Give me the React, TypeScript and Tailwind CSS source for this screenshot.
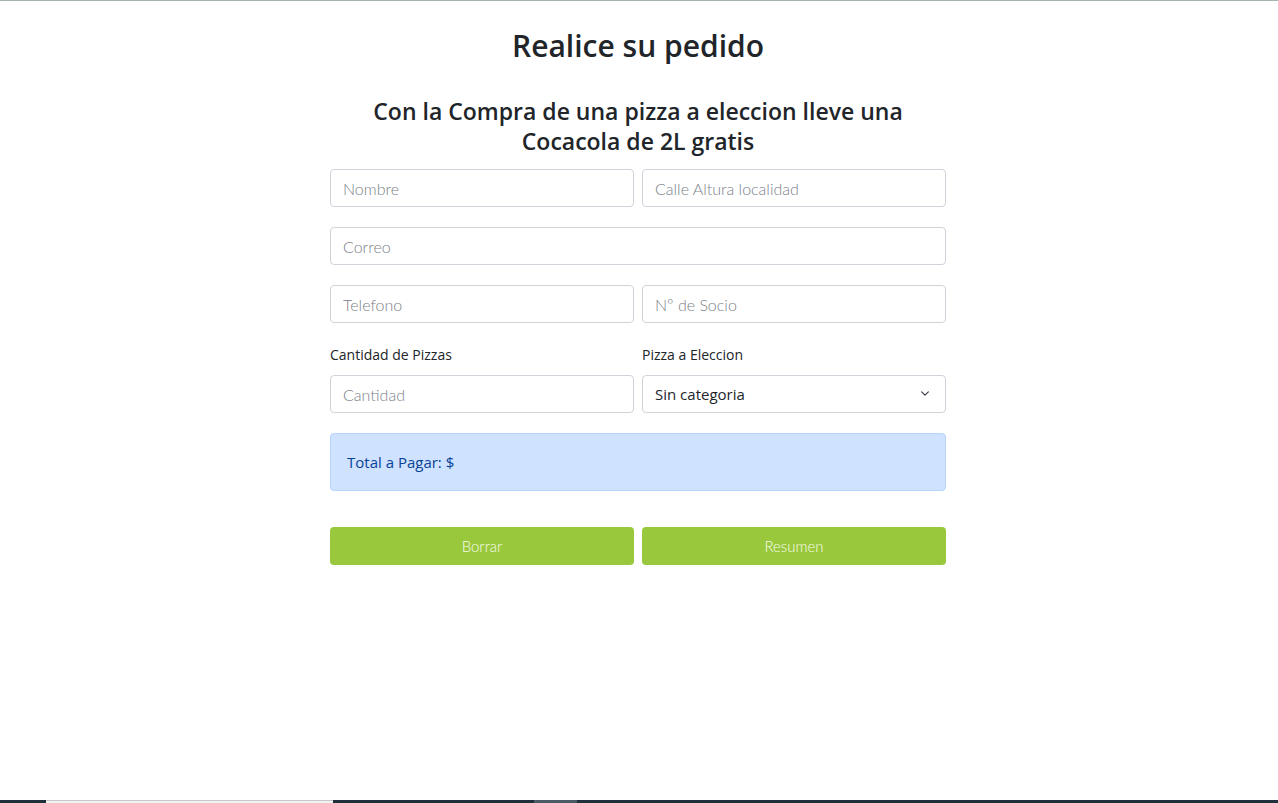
import React from "react";

const inputCls =
  "h-[38px] w-full rounded-[4px] border border-[#ced4da] bg-white px-3 text-[16px] text-[#212529] outline-none placeholder:text-[#7b8188] placeholder:font-light";

export default function App() {
  return (
    <div className="flex h-[803px] w-[1278px] flex-col overflow-hidden bg-white" style={{ fontFamily: '"Open Sans", "Noto Sans", sans-serif' }}>
      <div className="h-px w-full bg-[#a3b3aa]" />
      <div className="flex flex-1 justify-center">
        <div className="mr-[2px] w-[616px] pt-[24px]">
          <h1 className="text-center text-[30px] font-semibold leading-[42px] text-[#212529]">Realice su pedido</h1>
          <h3 className="mx-auto mt-[29px] w-[560px] text-center text-[23px] font-semibold leading-[30px] text-[#212529]">
            Con la Compra de una pizza a eleccion lleve una Cocacola de 2L gratis
          </h3>
          <div className="mt-[13px] flex flex-col gap-5" style={{ fontFamily: 'Lato, "Open Sans", sans-serif' }}>
            <div className="grid grid-cols-2 gap-2">
              <input className={inputCls} placeholder="Nombre" />
              <input className={inputCls} placeholder="Calle Altura localidad" />
            </div>
            <input className={inputCls} placeholder="Correo" />
            <div className="grid grid-cols-2 gap-2">
              <input className={inputCls} placeholder="Telefono" />
              <input className={inputCls} placeholder="Nº de Socio" />
            </div>
            <div className="grid grid-cols-2 gap-2" style={{ fontFamily: '"Open Sans", sans-serif' }}>
              <div className="flex flex-col">
                <label className="mb-2 text-[14px] leading-[24px] text-[#212529]">Cantidad de Pizzas</label>
                <input className={inputCls} placeholder="Cantidad" style={{ fontFamily: 'Lato, sans-serif' }} />
              </div>
              <div className="flex flex-col">
                <label className="mb-2 text-[14px] leading-[24px] text-[#212529]">Pizza a Eleccion</label>
                <div className="relative">
                  <select className="h-[38px] w-full appearance-none rounded-[4px] border border-[#ced4da] bg-white px-3 text-[15px] text-[#212529] outline-none">
                    <option>Sin categoria</option>
                  </select>
                  <svg className="pointer-events-none absolute right-[15px] top-[14px]" width="12" height="9" viewBox="0 0 16 16" fill="none" stroke="#343a40" strokeWidth="2" strokeLinecap="round" strokeLinejoin="round">
                    <path d="M2 5l6 6 6-6" />
                  </svg>
                </div>
              </div>
            </div>
            <div className="flex h-[58px] items-center rounded-[4px] border border-[#b6d4fe] bg-[#cfe2ff] px-4 text-[15px] text-[#084298]" style={{ fontFamily: '"Open Sans", sans-serif' }}>
              Total a Pagar: $
            </div>
            <div className="mt-4 grid grid-cols-2 gap-2">
              <button className="h-[38px] rounded-[4px] bg-[#99c83d] text-[15px] font-light text-[#f6fce8]">Borrar</button>
              <button className="h-[38px] rounded-[4px] bg-[#99c83d] text-[15px] font-light text-[#f6fce8]">Resumen</button>
            </div>
          </div>
        </div>
      </div>
      <div className="flex h-[3px] w-full bg-[#1e303c]">
        <div className="w-[46px]" />
        <div className="w-[287px] border-t border-[#c8c8c8] bg-[#f2f2f2]" />
        <div className="w-[201px]" />
        <div className="w-[43px] bg-[#4b5b66]" />
        <div className="flex-1" />
      </div>
    </div>
  );
}
